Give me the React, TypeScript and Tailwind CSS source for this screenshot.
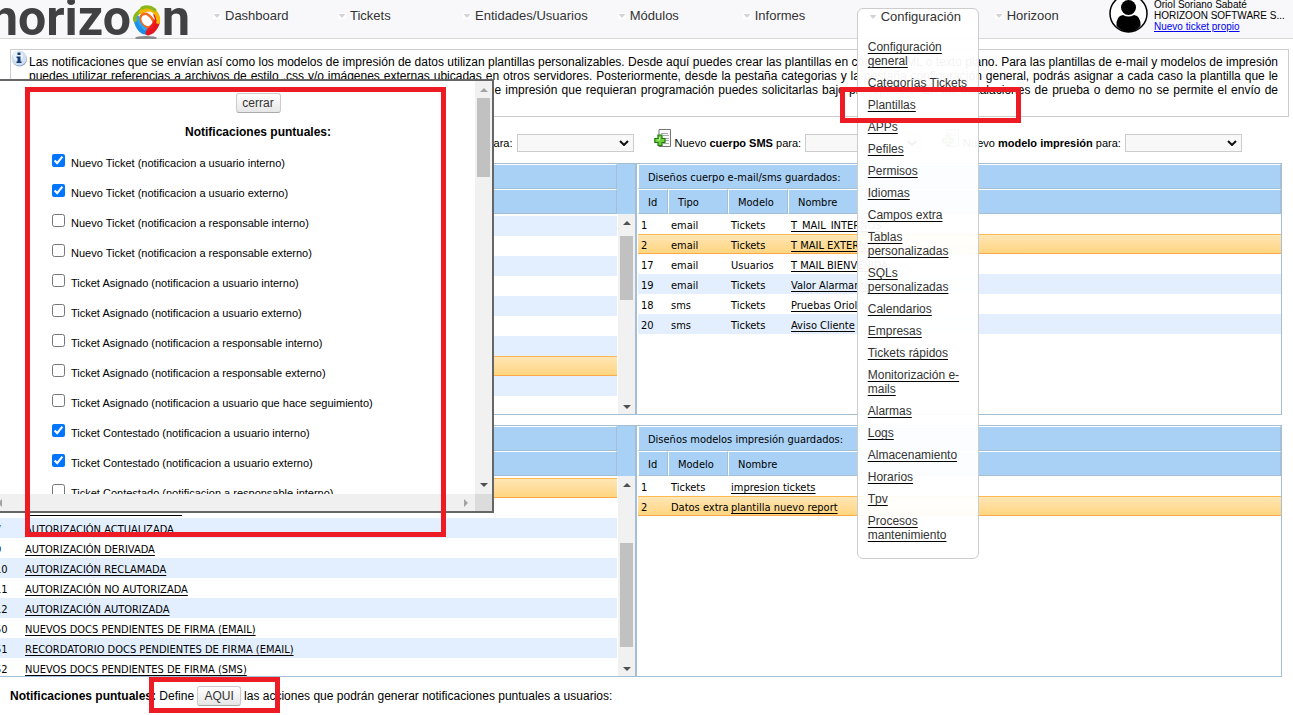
import type { ReactNode } from 'react'

const arial = "font-['Liberation_Sans',Arial,sans-serif]"
const tahoma = "font-['DejaVu_Sans_Condensed','Noto_Sans',sans-serif]"

const menuLinks = [
  'Configuración general',
  'Categorías Tickets',
  'Plantillas',
  'APPs',
  'Pefiles',
  'Permisos',
  'Idiomas',
  'Campos extra',
  'Tablas personalizadas',
  'SQLs personalizadas',
  'Calendarios',
  'Empresas',
  'Tickets rápidos',
  'Monitorización e-mails',
  'Alarmas',
  'Logs',
  'Almacenamiento',
  'Horarios',
  'Tpv',
  'Procesos mantenimiento',
]

const notifications: [string, boolean][] = [
  ['Nuevo Ticket (notificacion a usuario interno)', true],
  ['Nuevo Ticket (notificacion a usuario externo)', true],
  ['Nuevo Ticket (notificacion a responsable interno)', false],
  ['Nuevo Ticket (notificacion a responsable externo)', false],
  ['Ticket Asignado (notificacion a usuario interno)', false],
  ['Ticket Asignado (notificacion a usuario externo)', false],
  ['Ticket Asignado (notificacion a responsable interno)', false],
  ['Ticket Asignado (notificacion a responsable externo)', false],
  ['Ticket Asignado (notificacion a usuario que hace seguimiento)', false],
  ['Ticket Contestado (notificacion a usuario interno)', true],
  ['Ticket Contestado (notificacion a usuario externo)', true],
  ['Ticket Contestado (notificacion a responsable interno)', false],
]

const designs = [
  ['1', 'email', 'Tickets', 'T_MAIL_INTERNOS'],
  ['2', 'email', 'Tickets', 'T MAIL EXTERNOS'],
  ['17', 'email', 'Usuarios', 'T MAIL BIENVENIDA'],
  ['19', 'email', 'Tickets', 'Valor Alarmante'],
  ['18', 'sms', 'Tickets', 'Pruebas Oriol'],
  ['20', 'sms', 'Tickets', 'Aviso Cliente'],
]

const printModels = [
  ['1', 'Tickets', 'impresion tickets'],
  ['2', 'Datos extra', 'plantilla nuevo report'],
]

const emptyRows = Array.from({ length: 10 }, () => [''])

const authorizations = [
  ['', ''],
  ['6', 'AUTORIZACIÓN DOCUMENTADA'],
  ['7', 'AUTORIZACIÓN ACTUALIZADA'],
  ['9', 'AUTORIZACIÓN DERIVADA'],
  ['10', 'AUTORIZACIÓN RECLAMADA'],
  ['11', 'AUTORIZACIÓN NO AUTORIZADA'],
  ['12', 'AUTORIZACIÓN AUTORIZADA'],
  ['50', 'NUEVOS DOCS PENDIENTES DE FIRMA (EMAIL)'],
  ['51', 'RECORDATORIO DOCS PENDIENTES DE FIRMA (EMAIL)'],
  ['52', 'NUEVOS DOCS PENDIENTES DE FIRMA (SMS)'],
]

function Logo() {
  return (
    <div className="-ml-[10px] flex w-[223px] shrink-0 items-start font-[Roboto,sans-serif] text-[50px] leading-[37px] font-bold text-[#414042]">
      <span>horizo</span>
      <svg className="mt-[3px] h-[36px] w-[31px] shrink-0" viewBox="0 0 31 36" fill="none" aria-hidden="true">
        <ellipse cx="15" cy="35" rx="11" ry="2" fill="#8a8a8c" />
        <path d="M5 16 Q6 23 10 27 Q14 31 20 28" stroke="#1c8fe6" strokeWidth="5" strokeLinecap="round" />
        <path d="M17 30 Q22 29 25 23 Q28 18 25 12" stroke="#e4151f" strokeWidth="5" strokeLinecap="round" />
        <path d="M4 17 Q3 13 8 9 Q12 5 17 5" stroke="#8db81c" strokeWidth="4" strokeLinecap="round" />
        <path d="M10 9 Q19 4 24 9 Q28 14 27 19" stroke="#f5b400" strokeWidth="4" strokeLinecap="round" />
        <path d="M11 5 Q18 2 24 7" stroke="#8db81c" strokeWidth="3" strokeLinecap="round" />
        <path d="M9 15 Q11 10 16 11 Q21 14 23 19 Q20 26 15 24 Q9 21 9 15Z" fill="#fff" stroke="#f26a1b" strokeWidth="2.500" />
        <path d="M7 14 Q7 22 15 26" stroke="#2aa4f4" strokeWidth="2.500" strokeLinecap="round" />
        <path d="M24 18 Q22 24 17 27" stroke="#ed1c24" strokeWidth="3" strokeLinecap="round" />
      </svg>
      <span>n</span>
    </div>
  )
}

function NavLabel({ children }: { children: ReactNode }) {
  return (
    <a href="#" className="flex items-center gap-1 text-[13px] leading-4 text-[#333]">
      <svg className="h-[6px] w-2" viewBox="0 0 8 6" aria-hidden="true">
        <path d="M0 0H8V6H0Z" fill="#fff" />
        <path d="M0.500 1H7.500L4 5Z" fill="#d4d4d4" />
      </svg>
      {children}
    </a>
  )
}

function NavItem({ children }: { children: ReactNode }) {
  return (
    <li className="min-w-[125px] pr-[30px]">
      <NavLabel>{children}</NavLabel>
    </li>
  )
}

function ConfigMenu() {
  return (
    <li className="relative w-[127px] shrink-0">
      <div className="absolute top-0 -left-[11px] z-20 w-[122px] rounded-md border border-[#ccc] bg-white/95 pb-4 pl-[10px]">
        <div className="ml-px">
          <NavLabel>Configuración</NavLabel>
        </div>
        <ul className="mt-[15px] space-y-2 pr-2 text-xs leading-[14px] text-[#333]">
          {menuLinks.map((link) => (
            <li key={link}>
              <a href="#" className="underline decoration-black underline-offset-2">
                {link}
              </a>
            </li>
          ))}
        </ul>
      </div>
    </li>
  )
}

function Header() {
  return (
    <header className="flex h-[39px] border-b border-[#d8d8d8] bg-[#f8f8fb]">
      <Logo />
      <nav className="min-w-0 pt-2">
        <ul className="flex">
          <NavItem>Dashboard</NavItem>
          <NavItem>Tickets</NavItem>
          <NavItem>Entidades/Usuarios</NavItem>
          <NavItem>Módulos</NavItem>
          <NavItem>Informes</NavItem>
          <ConfigMenu />
          <li>
            <NavLabel>Horizoon</NavLabel>
          </li>
        </ul>
      </nav>
      <div className="ml-auto flex w-[184px] shrink-0 gap-[6px]">
        <svg className="-mt-[6px] h-[39px] w-[39px] shrink-0" viewBox="0 0 39 39" aria-hidden="true">
          <circle cx="19.500" cy="19.500" r="18.500" fill="#fff" stroke="#000" strokeWidth="1.500" />
          <circle cx="19.500" cy="13.500" r="7.500" />
          <path d="M7.500 32 Q7 22 14 21 Q19.500 24 25 21 Q32 22 31.500 32 Q26 38 19.500 38 Q13 38 7.500 32Z" />
        </svg>
        <div className="-mt-px text-[10px] leading-[11px] whitespace-nowrap text-black">
          <p>Oriol Soriano Sabaté</p>
          <p>HORIZOON SOFTWARE S...</p>
          <a href="#" className="text-[#0000ee] underline">
            Nuevo ticket propio
          </a>
        </div>
      </div>
    </header>
  )
}

function InfoBox() {
  return (
    <section className="mt-[10px] mr-1 ml-[10px] flex gap-[2px] border border-[#ccc] pr-[10px]">
      <svg className="h-[17px] w-4 shrink-0" viewBox="0 0 16 17" aria-hidden="true">
        <circle cx="8.500" cy="9" r="7.500" fill="#8fa9c9" />
        <circle cx="8" cy="8" r="7.500" fill="#cfe0f3" />
        <circle cx="7" cy="6" r="5" fill="#e9f2fb" />
        <path d="M6.500 2.500h3v2.500h-3zM5.500 6.500h4v5h1v1.500h-5v-1.500h1v-3.500h-1z" fill="#173a75" />
      </svg>
      <p className="min-w-0 flex-1 py-[5px] text-justify text-xs leading-[14px] text-black">
        <span className="block [text-align-last:justify]">
          Las notificaciones que se envían así como los modelos de impresión de datos utilizan plantillas personalizables.
          Desde aquí puedes crear las plantillas en código HTML o texto plano. Para las plantillas de e-mail y modelos de impresión
        </span>
        <span className="block [text-align-last:justify]">
          puedes utilizar referencias a archivos de estilo .css y/o imágenes externas ubicadas en otros servidores.
          Posteriormente, desde la pestaña categorias y la pestaña configuración general, podrás asignar a cada caso la plantilla que le
        </span>
        <span className="block [text-align-last:justify]">
          corresponda. Si necesitas plantillas con datos propios, las plantillas y/o los modelos de impresión que requieran
          programación puedes solicitarlas bajo presupuesto. En las instalaciones de prueba o demo no se permite el envío de
        </span>
        <span className="block">e-mails.</span>
      </p>
    </section>
  )
}

function NewTemplate({ id, kind }: { id: string; kind: string }) {
  return (
    <div className="flex shrink-0 items-start">
      <svg className="mr-[3px] h-[18px] w-[18px]" viewBox="0 0 18 18" fill="none" aria-hidden="true">
        <path d="M5 0.500H16.500V17.500H5Z" fill="#fafafa" stroke="#777" />
        <path d="M7 4.500h7M9 6.500h6M10 9.500h5M11 11.500h4M9 14.500h6" stroke="#aaa" />
        <path d="M4 6h4v3.500h3v4H8v3H4v-3H0.800v-4H4z" fill="#6fd03c" stroke="#1c7a10" strokeWidth="1.200" />
        <path d="M5.500 8v3H3" stroke="#c2f59a" />
      </svg>
      <label htmlFor={id} className="mt-[5px] mr-1 text-[11px] leading-[18px] whitespace-nowrap text-black">
        Nuevo <b>{kind}</b> para:
      </label>
      <div className="relative mt-[5px]">
        <select id={id} className="block h-[18px] w-[117px] appearance-none border border-[#ccc] bg-[#f8f8f8] text-[11px]">
          <option />
        </select>
        <svg className="pointer-events-none absolute top-[6px] right-[5px] h-[6px] w-[10px]" viewBox="0 0 10 6" fill="none" aria-hidden="true">
          <path d="M1 1l4 4 4-4" stroke="#111" strokeWidth="2" />
        </svg>
      </div>
    </div>
  )
}

type GridProps = {
  title?: string
  columns: string[]
  widths: string[]
  rows: string[][]
  selected: number
  striped: 'odd' | 'even'
  label: string
  padded?: boolean
}

function GridTable({ title, columns, widths, rows, selected, striped, label, padded }: GridProps) {
  const head =
    'h-[25px] border-t border-l border-r border-b border-t-white border-l-white border-r-[#a4bed4] border-b-[#a4bed4] bg-[#a9d0f5] pt-px pb-0 pr-0 pl-[9px] text-left font-normal whitespace-nowrap'

  return (
    <table aria-label={label} className={`w-full table-fixed border-separate border-spacing-0 text-[11px] leading-[15px] text-black ${tahoma}`}>
      <colgroup>
        {widths.map((width, i) => (
          <col key={i} className={width} />
        ))}
      </colgroup>
      <thead>
        <tr>
          <th colSpan={columns.length} className={head}>
            {title}
          </th>
        </tr>
        <tr>
          {columns.map((column, i) => (
            <th key={i} className={head}>
              {column}
            </th>
          ))}
        </tr>
      </thead>
      <tbody>
        {padded && (
          <tr>
            <td colSpan={columns.length} className="h-[2px] p-0" />
          </tr>
        )}
        {rows.map((row, r) => {
          const stripe = r % 2 === (striped === 'even' ? 0 : 1) ? 'bg-[#e3efff]' : 'bg-white'
          const look =
            r === selected
              ? 'border-t border-b border-t-[#ffb951] border-b-[#ffa94a] bg-linear-to-b from-[#ffe6b5] to-[#ffd57f]'
              : `border-y border-transparent ${stripe}`
          return (
            <tr key={r}>
              {row.map((cell, c) => (
                <td key={c} className={`h-5 pt-[3px] pr-0 pb-0 pl-[3px] whitespace-nowrap ${look}`}>
                  {c === row.length - 1 && cell ? (
                    <a href="#" className="underline underline-offset-2">
                      {cell}
                    </a>
                  ) : (
                    cell
                  )}
                </td>
              ))}
            </tr>
          )
        })}
      </tbody>
    </table>
  )
}

function Arrow({ dir, muted }: { dir: 'up' | 'down' | 'left' | 'right'; muted?: boolean }) {
  const shapes = { up: 'M0 6L4 2L8 6Z', down: 'M0 2L4 6L8 2Z', left: 'M6 0L2 4L6 8Z', right: 'M2 0L6 4L2 8Z' }
  return (
    <svg className="h-2 w-2 shrink-0" viewBox="0 0 8 8" aria-hidden="true">
      <path d={shapes[dir]} fill={muted ? '#a3a3a3' : '#505050'} />
    </svg>
  )
}

function GridScroll({ thumb }: { thumb: string }) {
  return (
    <div className="flex w-[18px] shrink-0 flex-col bg-[#f1f1f1]">
      <div className="h-[50px] bg-[#a9d0f5]" />
      <div className="flex flex-1 flex-col items-center border-l border-white py-[5px]">
        <Arrow dir="up" />
        <div className={`w-[13px] bg-[#c1c1c1] ${thumb}`} />
        <div className="mt-auto">
          <Arrow dir="down" />
        </div>
      </div>
    </div>
  )
}

function GridRow({ left, right, thumb }: { left: ReactNode; right: ReactNode; thumb: string }) {
  return (
    <div className="grid h-[252px] grid-cols-[635fr_647fr] overflow-hidden border-y border-[#a4bed4]">
      <div className="-ml-2 flex min-w-0">
        <div className="min-w-0 flex-1">{left}</div>
        <GridScroll thumb={thumb} />
      </div>
      <div className="min-w-0 border-r border-l-2 border-[#a4bed4] pl-px">{right}</div>
    </div>
  )
}

const buttonLook =
  'rounded-[3px] border border-[#ccc] border-b-[#aaa] bg-linear-to-b from-white to-[#e6e6e6] text-center text-[#333]'

function NotificationsDialog() {
  return (
    <div
      role="dialog"
      aria-labelledby="dialog-title"
      className="absolute top-[79px] left-0 z-10 flex h-[434px] w-[494px] flex-col border-y-2 border-r-2 border-[#666] bg-white"
    >
      <div className="flex min-h-0 flex-1">
        <div className="min-w-0 flex-1 overflow-hidden pt-3 pl-[41px]">
          <button type="button" className={`mx-auto block h-5 w-[45px] text-xs leading-[18px] ${buttonLook}`}>
            cerrar
          </button>
          <h2 id="dialog-title" className="mt-3 text-center text-xs leading-[14px] font-bold text-black">
            Notificaciones puntuales:
          </h2>
          <ul className="mt-[9px] pl-[11px]">
            {notifications.map(([text, checked]) => (
              <li key={text} className="h-[30px]">
                <label className="flex items-start gap-[6px] pt-[6px] text-[11px] leading-[13px] text-black">
                  <input type="checkbox" defaultChecked={checked} className="m-0 h-[13px] w-[13px]" />
                  <span className="pt-[3px]">{text}</span>
                </label>
              </li>
            ))}
          </ul>
        </div>
        <div className="flex w-[17px] flex-col items-center bg-[#f1f1f1] py-[5px]">
          <Arrow dir="up" muted />
          <div className="mt-1 h-[79px] w-[13px] bg-[#c1c1c1]" />
          <div className="mt-auto">
            <Arrow dir="down" />
          </div>
        </div>
      </div>
      <div className="flex h-[17px] items-center justify-between bg-[#f0f0f0]">
        <div className="-ml-1">
          <Arrow dir="left" muted />
        </div>
        <div className="flex items-center gap-[5px]">
          <Arrow dir="right" muted />
          <div className="h-[17px] w-[17px] bg-[#dcdcdc]" />
        </div>
      </div>
    </div>
  )
}

export default function App() {
  return (
    <div className={`relative overflow-x-hidden bg-white ${arial}`}>
      <Header />
      <InfoBox />

      <div className="flex h-[46px] gap-5 pt-3 pl-[357px]">
        <NewTemplate id="new-mail" kind="cuerpo e-mail" />
        <NewTemplate id="new-sms" kind="cuerpo SMS" />
        <NewTemplate id="new-print" kind="modelo impresión" />
      </div>

      <main className="mr-[11px] space-y-[10px]">
        <GridRow
          thumb="mt-[9px] h-16"
          left={<GridTable label="Plantillas" padded columns={['']} widths={['w-full']} rows={emptyRows} selected={7} striped="even" />}
          right={
            <GridTable
              label="Diseños cuerpo"
              title="Diseños cuerpo e-mail/sms guardados:"
              columns={['Id', 'Tipo', 'Modelo', 'Nombre']}
              widths={['w-[30px]', 'w-[60px]', 'w-[60px]', '']}
              rows={designs}
              selected={1}
              striped="odd"
            />
          }
        />
        <GridRow
          thumb="mt-[54px] h-[104px]"
          left={
            <GridTable label="Autorizaciones" padded columns={['', '']} widths={['w-[30px]', '']} rows={authorizations} selected={0} striped="even" />
          }
          right={
            <GridTable
              label="Modelos de impresión"
              title="Diseños modelos impresión guardados:"
              columns={['Id', 'Modelo', 'Nombre']}
              widths={['w-[30px]', 'w-[60px]', '']}
              rows={printModels}
              selected={1}
              striped="odd"
            />
          }
        />
      </main>

      <div className="flex h-[38px] items-center pl-[10px] text-xs whitespace-pre text-black">
        <b>Notificaciones puntuales:</b> Define
        <button type="button" className={`mx-[3px] h-5 w-11 text-xs leading-[18px] ${buttonLook}`}>
          AQUI
        </button>
        las acciones que podrán generar notificaciones puntuales a usuarios:
      </div>

      <NotificationsDialog />

      {/* highlight frames */}
      <div className="pointer-events-none absolute top-[87px] left-[25px] z-30 h-[450px] w-[421px] border-[5px] border-[#ed1c24]" />
      <div className="pointer-events-none absolute top-[87px] left-[840px] z-30 h-9 w-[181px] border-[5px] border-[#ed1c24]" />
      <div className="pointer-events-none absolute top-[677px] left-[149px] z-30 h-9 w-[131px] border-[5px] border-[#ed1c24]" />
    </div>
  )
}
